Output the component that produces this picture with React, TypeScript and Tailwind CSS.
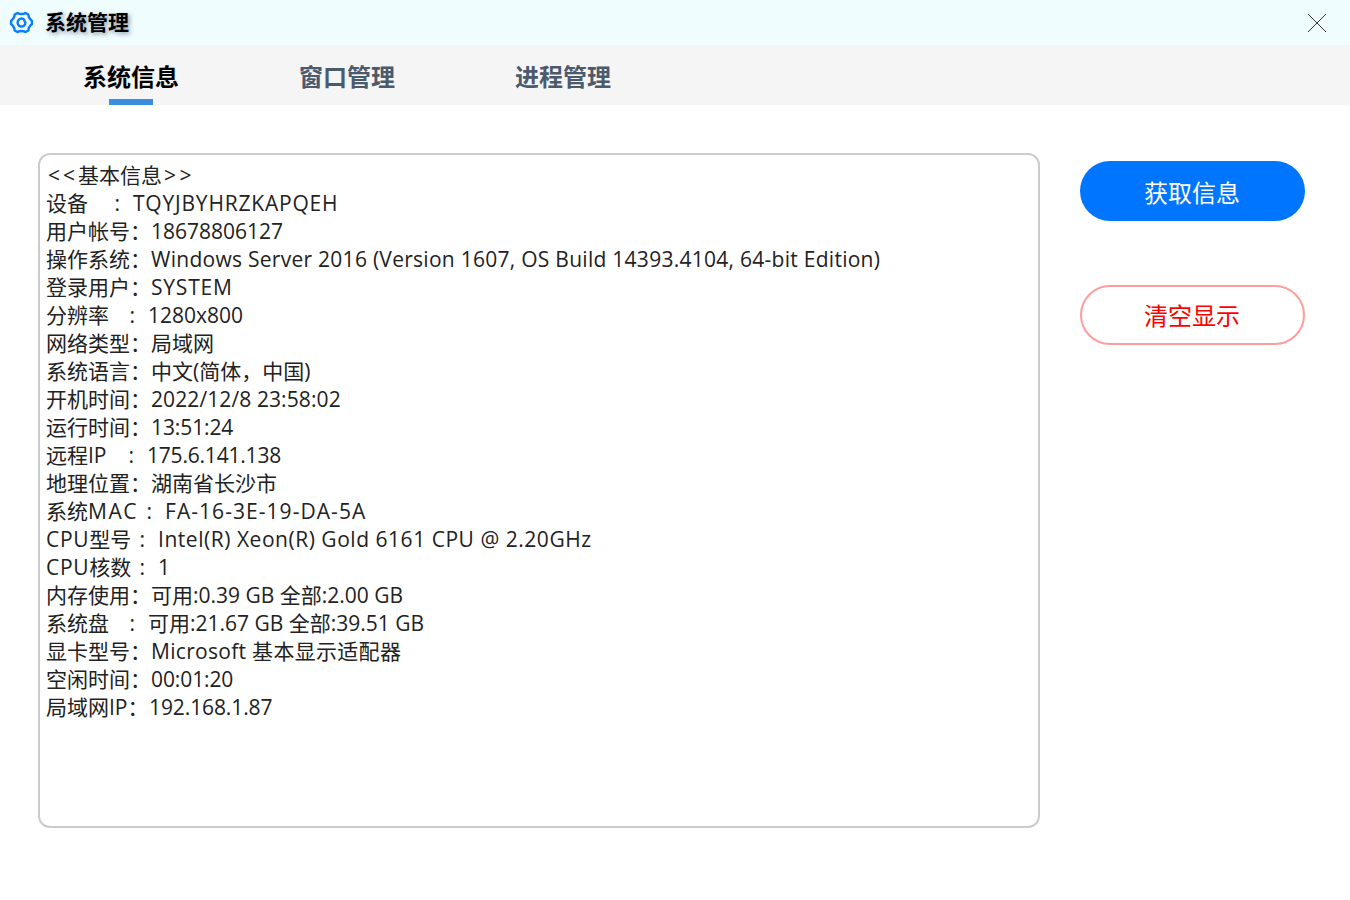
import React from 'react';

const rows = [
  { label: '设备', pad: 'w-[87px]', value: 'TQYJBYHRZKAPQEH', fit: 'tracking-[0.8px]' },
  { label: '用户帐号：', pad: 'w-[105px]', value: '18678806127', fit: '' },
  { label: '操作系统：', pad: 'w-[105px]', value: 'Windows Server 2016 (Version 1607, OS Build 14393.4104, 64-bit Edition)', fit: 'tracking-[0.27px]' },
  { label: '登录用户：', pad: 'w-[105px]', value: 'SYSTEM', fit: 'tracking-[0.8px]' },
  { label: '分辨率', pad: 'w-[102px]', value: '1280x800', fit: '' },
  { label: '网络类型：', pad: 'w-[105px]', value: '局域网', fit: '' },
  { label: '系统语言：', pad: 'w-[105px]', value: '中文(简体，中国)', fit: '' },
  { label: '开机时间：', pad: 'w-[105px]', value: '2022/12/8 23:58:02', fit: 'tracking-[0.1px]' },
  { label: '运行时间：', pad: 'w-[105px]', value: '13:51:24', fit: 'tracking-[-0.1px]' },
  { label: '远程IP', pad: 'w-[101px]', value: '175.6.141.138', fit: 'tracking-[-0.2px]' },
  { label: '地理位置：', pad: 'w-[105px]', value: '湖南省长沙市', fit: '' },
  { label: '系统MAC', pad: 'w-[119px]', value: 'FA-16-3E-19-DA-5A', fit: 'tracking-[1.05px]', head: 'tracking-[1.6px]' },
  { label: 'CPU型号', pad: 'w-[112px]', value: 'Intel(R) Xeon(R) Gold 6161 CPU @ 2.20GHz', fit: 'tracking-[0.53px]', head: 'tracking-[0.7px]' },
  { label: 'CPU核数', pad: 'w-[112px]', value: '1', fit: '', head: 'tracking-[0.7px]' },
  { label: '内存使用：', pad: 'w-[105px]', value: '可用:0.39 GB 全部:2.00 GB', fit: '' },
  { label: '系统盘', pad: 'w-[102px]', value: '可用:21.67 GB 全部:39.51 GB', fit: '' },
  { label: '显卡型号：', pad: 'w-[105px]', value: 'Microsoft 基本显示适配器', fit: 'tracking-[0.3px]' },
  { label: '空闲时间：', pad: 'w-[105px]', value: '00:01:20', fit: 'tracking-[-0.1px]' },
  { label: '局域网IP：', pad: 'w-[103px]', value: '192.168.1.87', fit: 'tracking-[-0.1px]' },
];

const tabs = ['系统信息', '窗口管理', '进程管理'];

function InfoRow({ label, pad, value, fit, head = '' }: { label: string; pad: string; value: string; fit: string; head?: string }) {
  const spaced = !label.endsWith('：');
  return (
    <div className="flex">
      <div className={`${pad} relative shrink-0`}>
        {label.split(/([A-Z]+)/).map((part, i) => (
          <span key={i} className={/[A-Z]/.test(part) ? head : ''}>{part}</span>
        ))}
        {spaced && <span className="absolute right-[13px] top-0">:</span>}
      </div>
      <div className={fit}>{value}</div>
    </div>
  );
}

export default function App() {
  return (
    <div className="w-[1350px] h-[900px] bg-white overflow-hidden font-['Open_Sans','Noto_Sans_CJK_SC',sans-serif]">
      <div className="h-[45px] bg-[#f0fdff] flex items-center justify-between pl-[9px] pr-[23px]">
        <div className="flex items-center gap-[11px]">
          <svg width="25" height="25" viewBox="0 0 24 24" fill="none" stroke="#0a7cff" strokeWidth="2.3" strokeLinejoin="round" strokeLinecap="round">
            <path d="M8.200 2.800 Q9.800 3.900 12 3.900 Q14.200 3.900 15.800 2.800 L18.600 4.400 Q18.700 6.600 19.800 8.100 Q20.700 9.600 22 10.300 V13.700 Q20.700 14.400 19.800 15.900 Q18.700 17.400 18.600 19.600 L15.800 21.200 Q14.200 20.100 12 20.100 Q9.800 20.100 8.200 21.200 L5.400 19.600 Q5.300 17.400 4.200 15.900 Q3.300 14.400 2 13.700 V10.300 Q3.300 9.600 4.200 8.100 Q5.300 6.600 5.400 4.400 Z" />
            <path d="M15.800 12 A3.800 3.800 0 1 1 13.800 8.700 Q15 9.300 15 11" />
          </svg>
          <span className="text-[21px] font-bold text-black leading-none [text-shadow:2px_2px_4px_rgba(40,60,90,0.5)]">系统管理</span>
        </div>
        <svg width="20" height="20" viewBox="0 0 20 20" stroke="#333" strokeWidth="1" className="block">
          <path d="M1 1l18 18M19 1L1 19" />
        </svg>
      </div>

      <div className="h-[60px] bg-[#f5f5f5] flex pl-[23px]">
        {tabs.map((t, i) => (
          <div key={t} className="w-[216px] h-full flex flex-col items-center justify-between">
            <span className={i === 0 ? 'mt-[14px] text-[24px] leading-[36px] font-bold text-black' : 'mt-[14px] text-[24px] leading-[36px] font-bold text-[#4c5a6e]'}>{t}</span>
            {i === 0 && <div className="w-[44px] h-[6px] bg-[#3a8ee0]" />}
          </div>
        ))}
      </div>

      <div className="flex items-start pl-[38px] pt-[48px]">
        <div className="w-[1002px] h-[675px] border-2 border-[#cccccc] rounded-[12px] pt-[6px] pl-[6px] text-[21px] leading-[28px] text-[#222222] whitespace-pre">
          <div className="flex">
            <span className="pl-[2px] tracking-[3px]">{'<<'}</span>
            <span>基本信息</span>
            <span className="pl-[2px] tracking-[3.500px]">{'>>'}</span>
          </div>
          {rows.map((r) => (
            <InfoRow key={r.label} {...r} />
          ))}
        </div>
        <div className="ml-[40px] mt-[8px] flex flex-col gap-[64px]">
          <button className="w-[225px] h-[60px] pt-[3px] pr-[1px] rounded-full bg-[#0075ff] text-white text-[24px]">获取信息</button>
          <button className="w-[225px] h-[60px] pt-[2px] pr-[1px] rounded-full border-2 border-[#ff9c9c] bg-white text-[#ff0000] text-[24px]">清空显示</button>
        </div>
      </div>
    </div>
  );
}
